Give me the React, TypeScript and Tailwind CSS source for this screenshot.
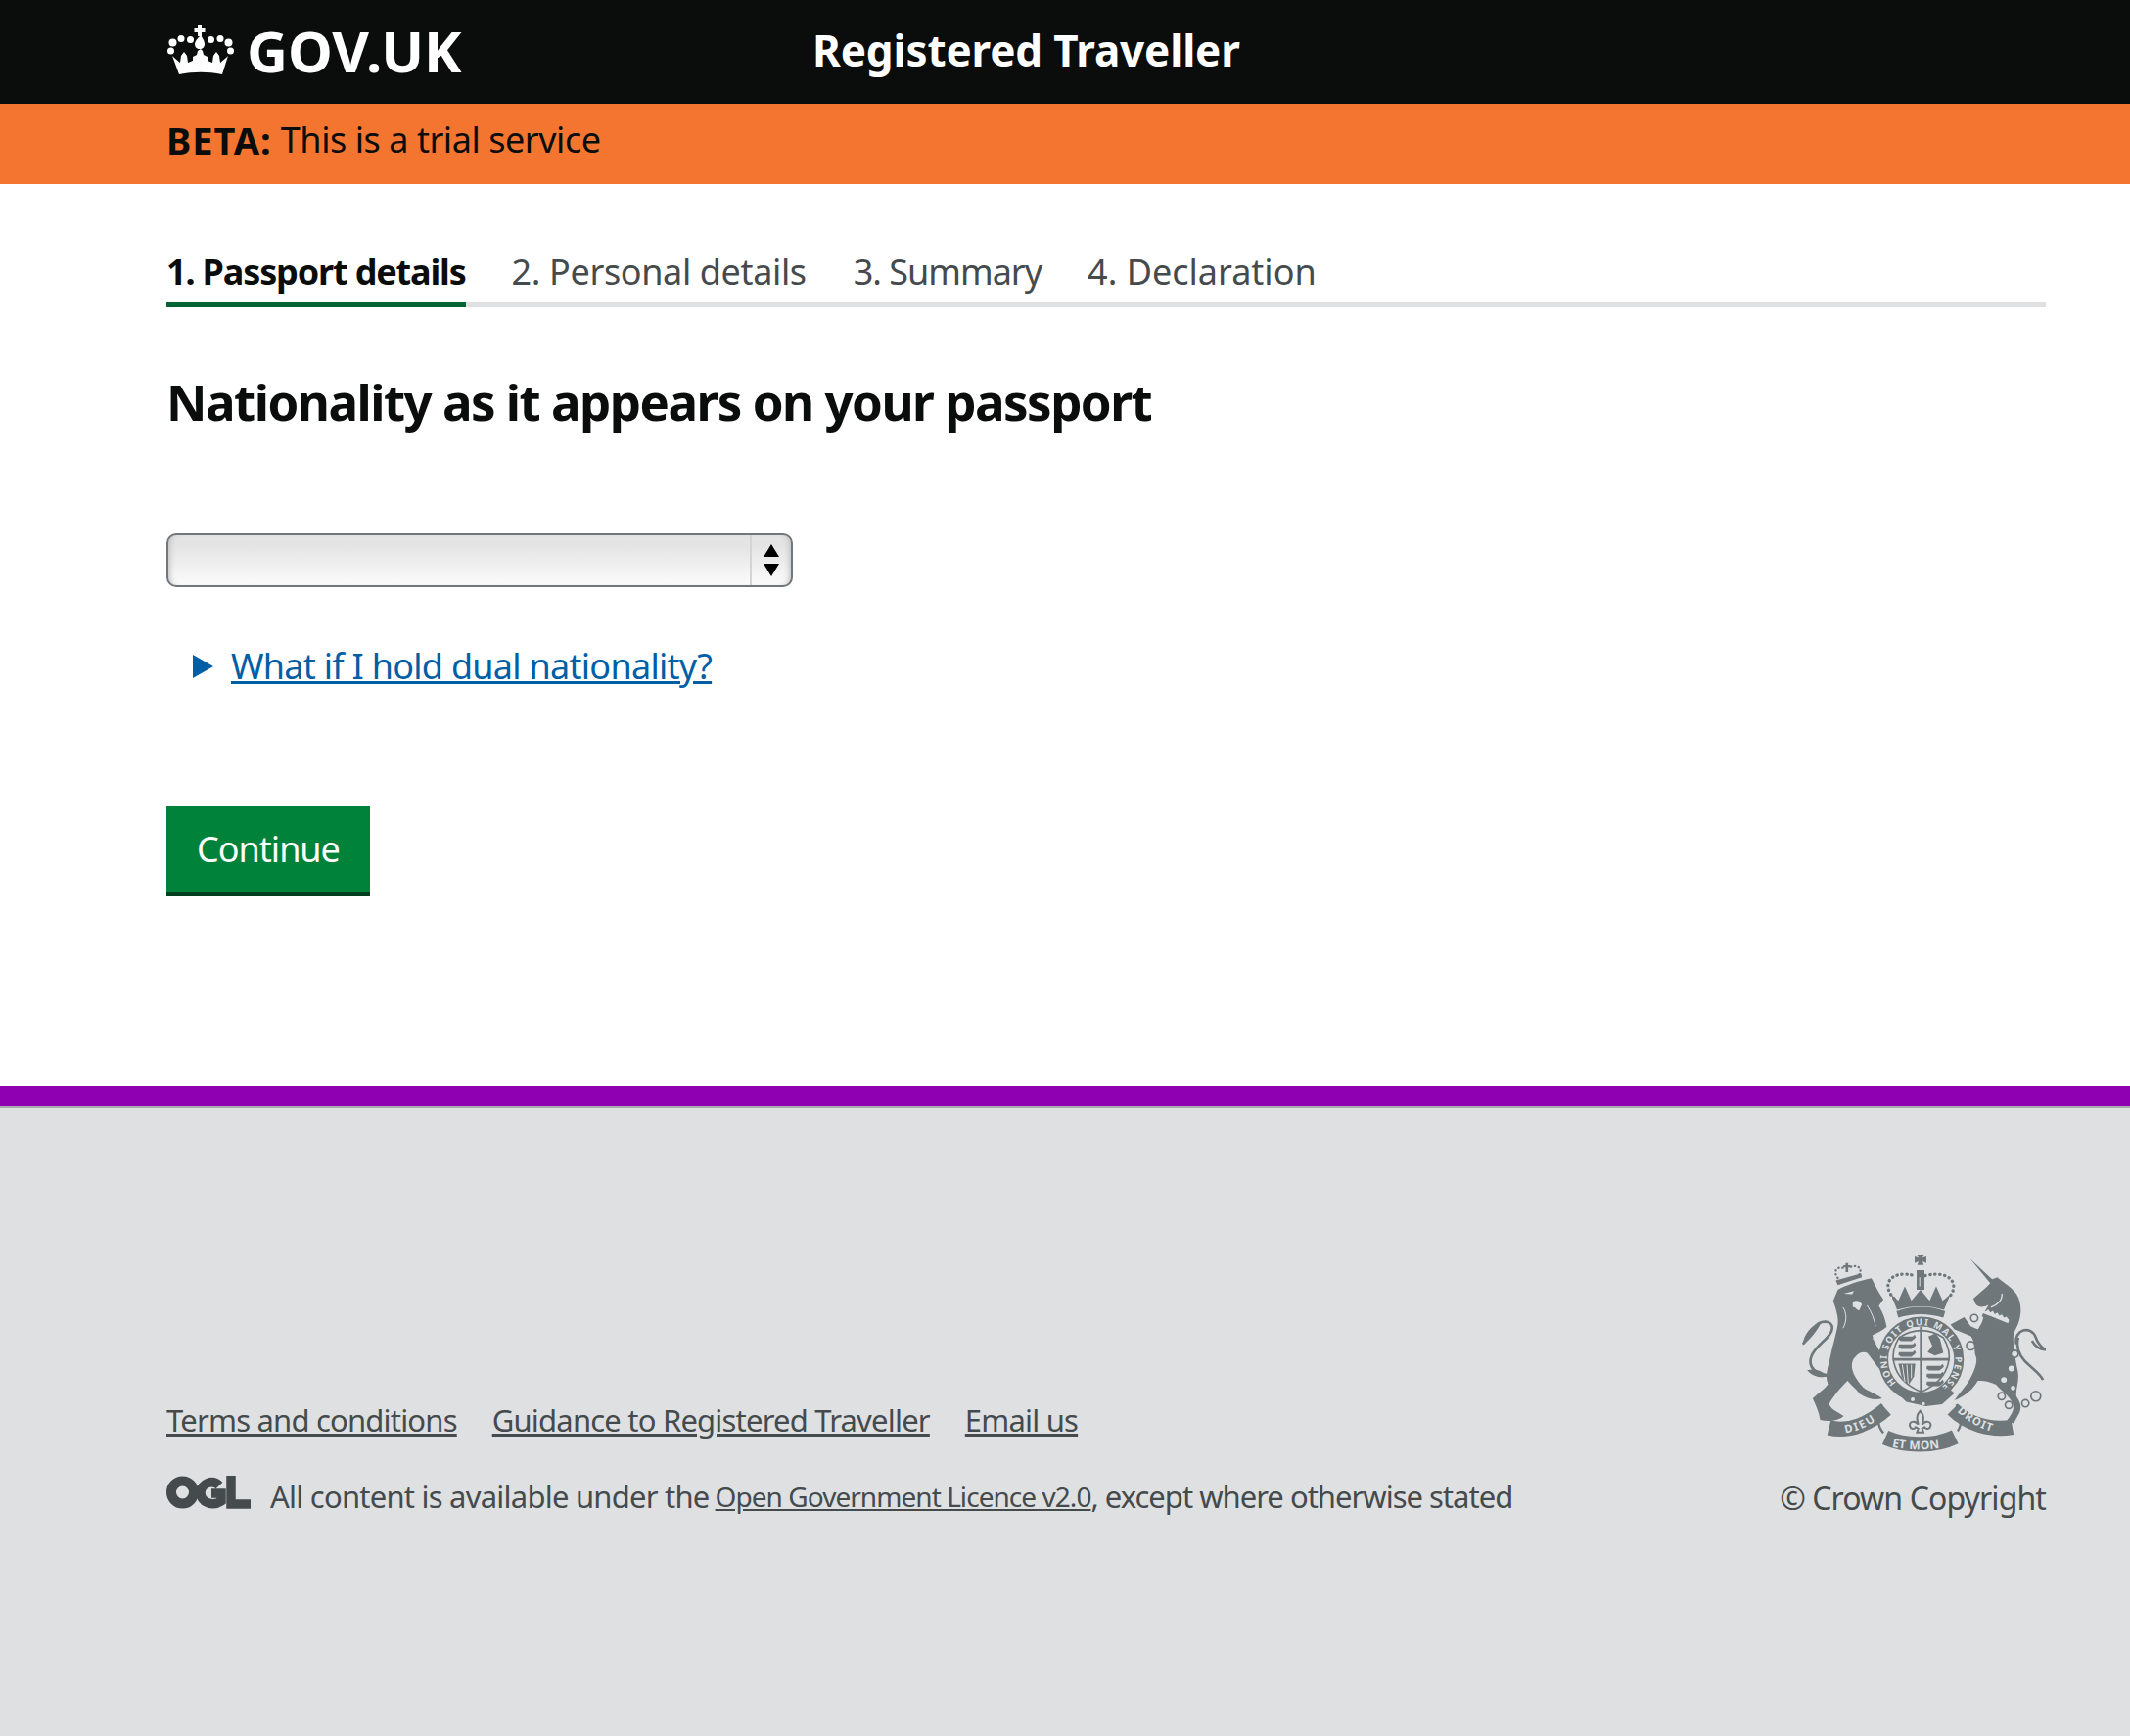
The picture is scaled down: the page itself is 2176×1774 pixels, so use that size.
function CrownLogo() {
  const dots = [
    [5.5, 17.5, 4], [14, 13.5, 3.5], [23.5, 14.5, 3.5], [44.5, 14.5, 3.5], [54, 13.5, 3.5], [62.5, 17.5, 4], [3.5, 26, 3.5], [64.5, 26, 3.5],
  ];
  return (
    <svg viewBox="0 0 68 51" className="ml-px h-[51px] w-[68px]" fill="#fff">
      {dots.map(([cx, cy, r]) => (
        <circle key={`${cx}-${cy}`} cx={cx} cy={cy} r={r} />
      ))}
      <path d="M31 0h4v3h3.5v4H35v4h-4V7h-3.5V3H31z" />
      <path d="M34 10c2 3 4 6 4 9s-2 5-5 5-5-2-5-5 3-6 6-9z" />
      <path d="M7 33l6 5 1-7 3-4 3 4 1 7 5-2v-4l4-2 1-4 3-2 2 2 1 4 4 2v4l5 2 1-7 3-4 3 4 1 7 6-5 2-2-6 19c-15-3-29-3-44 0L5 31z" />
    </svg>
  );
}

function OglLogo() {
  return (
    <svg viewBox="0 0 86 34" className="h-[34px] w-[86px]" fill="none" stroke="#454a4c">
      <circle cx="16.5" cy="17" r="11.5" strokeWidth="10" />
      <path d="M54 10C47 3 35 8 35 17.5S47 32 56 26v-8H46" strokeWidth="9.5" />
      <path d="M66 0v29h20" strokeWidth="9.5" />
    </svg>
  );
}

function CoatOfArms() {
  const c = '#6f777b';
  const bg = '#dee0e2';
  const font = "'Noto Sans', sans-serif";
  const lions = [
    [420, 322], [420, 346], [420, 370], [506, 412], [506, 436], [506, 460],
  ];
  return (
    <svg viewBox="120 70 750 610" className="h-[203px] w-[250px]">
      <defs>
        <path id="garter" d="M411 464A105 105 0 1 1 557 471" />
        <path id="dieu" d="M255 618C300 612 345 590 372 558" />
        <path id="etmon" d="M398 660C450 672 520 672 578 658" />
        <path id="droit" d="M598 552C630 585 680 610 722 618" />
      </defs>

      {/* lion */}
      <path fill={c} d="M232 178C255 165 300 150 335 143C345 160 350 175 372 208L358 228C372 250 378 270 382 292C365 305 350 312 338 318C350 350 372 378 392 418L372 432C355 420 345 400 322 372C305 365 290 375 278 395C268 420 285 450 310 478C325 490 345 495 368 512C345 520 320 510 300 498C285 480 272 470 262 458C240 480 218 505 205 530C215 550 235 555 250 566C235 580 205 585 178 578C175 555 165 535 155 512C172 495 190 485 202 468C190 440 205 410 212 370C222 330 228 310 232 285C235 260 225 235 218 212Z" />
      <path fill="none" stroke={c} strokeWidth="8" d="M205 440C165 440 140 415 150 385C160 350 215 325 215 295C215 270 175 270 160 295C150 310 140 330 125 345" />
      <path fill={c} d="M124 348C128 315 150 285 182 278C170 300 150 330 124 348ZM138 425C160 420 185 425 200 445C175 450 152 442 138 425Z" />
      <path fill="none" stroke={c} strokeWidth="7" strokeDasharray="1 11" strokeLinecap="round" d="M232 142C215 120 232 105 250 112M272 108C295 100 310 115 296 134" />
      <path fill={c} d="M226 150L304 128L306 140L232 164ZM256 96h8v7h7v7h-7v14h-8v-14h-7v-7h7z" />
      <path fill={bg} d="M250 190L282 182L276 192ZM278 215C290 207 304 215 306 223L298 241C290 243 288 231 278 231Z" />
      <path fill="none" stroke={bg} strokeWidth="3" d="M248 232C260 250 260 275 248 296M322 226C336 248 344 268 348 290M340 326L386 412" />

      {/* unicorn */}
      <path fill={c} d="M638 83L706 146L722 140C730 150 760 165 780 190C796 215 798 250 785 285L772 312C768 340 775 380 785 430C790 460 778 480 780 505C790 520 798 535 790 555L772 588L750 582C762 565 775 550 770 530C760 505 735 490 718 470C700 462 685 455 662 458C650 480 625 505 590 518C605 495 630 470 640 448C655 420 662 395 655 380C650 365 655 340 640 320L590 300L578 285L620 262L640 290L662 300C672 285 680 270 680 250L695 225C680 232 665 235 655 222L648 205C665 190 685 175 700 158Z" />
      <path fill="none" stroke={bg} strokeWidth="4" d="M736 190C738 210 722 225 702 232" />
      <path fill={bg} d="M672 248l8-12 6 9 8-7 6 10 8-5 6 10 8-5 6 10 8-4 6 10 8-3 8 10-6 18-78-30z" />
      <path fill={c} d="M678 250l90 36-4 10-90-36z" />
      <path fill="none" stroke={c} strokeWidth="8" d="M780 345C772 300 825 285 840 325C845 340 855 352 868 362C850 362 838 352 828 335M786 325C775 365 800 395 825 415C840 428 855 440 862 455" />
      {[[651, 265, 11], [640, 350, 13], [775, 375, 11], [735, 505, 11], [757, 532, 11], [808, 527, 11], [840, 505, 15]].map(([cx, cy, r]) => (
        <circle key={cx} cx={cx} cy={cy} r={r} fill={bg} stroke={c} strokeWidth="5" />
      ))}
      {[[765, 420, 9], [742, 455, 9], [770, 480, 7]].map(([cx, cy, r]) => (
        <circle key={cx} cx={cx} cy={cy} r={r} fill={bg} />
      ))}

      {/* main crown */}
      <path fill="none" stroke={c} strokeWidth="10" strokeDasharray="1 14" strokeLinecap="round" d="M405 205C365 165 390 115 470 135M500 135C580 115 610 165 570 205" />
      <path fill={c} d="M476 70h20l-4 10 12-4v20l-12-5 4 11h-20l4-11-12 5V76l12 4zM474 118h24v60h-24z" />
      <path fill={bg} d="M482 140h3v28h-3zM489 140h3v28h-3z" />
      <path fill={c} d="M395 192L418 212L438 168L458 212L486 178L514 212L534 168L554 212L578 192L558 240C510 226 462 226 414 240Z" />
      <path fill={c} d="M412 244C460 226 515 226 562 244L556 264C510 250 462 250 418 264Z" />

      {/* garter */}
      <circle cx="488" cy="392" r="116" fill={bg} stroke={c} strokeWidth="30" />
      <path fill={bg} stroke={c} strokeWidth="5" d="M420 325Q488 282 556 325Q580 365 572 400Q560 460 488 492Q415 460 404 400Q396 365 420 325Z" />
      <path stroke={c} strokeWidth="8" d="M488 292V492M400 392H576" />
      {lions.map(([x, y]) => (
        <path key={`${x}-${y}`} fill={c} d={`M${x} ${y}h42l6-6 4 8-6 6-8 6h-32l-8-6z`} />
      ))}
      <path fill={c} d="M510 322L532 312L546 330L556 372L530 380L508 370L522 350Z" />
      <path fill={c} d="M418 405H470L466 445L448 472L428 445Z" />
      <path stroke={bg} strokeWidth="3" d="M430 408L438 460M444 408L448 466M458 408V450" />
      <text fill={bg} fontFamily={font} fontWeight="700" fontSize="28">
        <textPath href="#garter" textLength="505">HONI SOIT QUI MAL Y PENSE</textPath>
      </text>
      <path fill={c} d="M418 498L448 490L540 504L568 476L590 496L552 530L502 536L442 522Z" />
      <circle cx="462" cy="515" r="6" fill={bg} />
      <circle cx="495" cy="528" r="5" fill={bg} />

      {/* motto */}
      <g fill="none" stroke={c} strokeWidth="46">
        <path d="M205 602C270 618 335 585 380 545" />
        <path d="M378 632C440 660 530 660 592 630" />
        <path d="M585 545C630 590 700 612 768 600" />
      </g>
      <path fill="none" stroke={c} strokeWidth="7" d="M368 530C350 560 352 595 372 618M596 530C612 560 615 590 600 612" />
      <path fill={bg} stroke={c} strokeWidth="6" d="M485 550C499 565 495 578 491 592C501 578 519 582 517 596C515 606 503 608 499 600L491 604L495 616H475L479 604L471 600C467 608 455 606 453 596C451 582 469 578 479 592C475 578 471 565 485 550Z" />
      <text fill={bg} fontFamily={font} fontWeight="700" fontSize="34" letterSpacing="6">
        <textPath href="#dieu">DIEU</textPath>
      </text>
      <text fill={bg} fontFamily={font} fontWeight="700" fontSize="36" letterSpacing="1">
        <textPath href="#etmon">ET MON</textPath>
      </text>
      <text fill={bg} fontFamily={font} fontWeight="700" fontSize="34" letterSpacing="4">
        <textPath href="#droit">DROIT</textPath>
      </text>
    </svg>
  );
}

function SelectBox() {
  return (
    <div className="flex h-[55px] w-[640px] rounded-[10px] border-2 border-[#6f777b] bg-gradient-to-b from-[#e4e4e4] from-20% to-[#fbfbfb] shadow-[inset_6px_0_6px_-5px_#b8b8b8,inset_-6px_0_6px_-5px_#b8b8b8]">
      <div className="flex-1" />
      <div className="flex w-[42px] flex-col items-center justify-center gap-[7px] border-l-2 border-[#d4d4d4]">
        <span className="h-0 w-0 border-x-[8px] border-b-[13px] border-x-transparent border-b-black" />
        <span className="h-0 w-0 border-x-[8px] border-t-[13px] border-x-transparent border-t-black" />
      </div>
    </div>
  );
}

const tabs = [
  { label: '2. Personal details', className: 'tracking-[-0.37px]' },
  { label: '3. Summary', className: 'tracking-[-1px] ml-px' },
  { label: '4. Declaration', className: '' },
];

export default function App() {
  return (
    <div className="flex min-h-[1774px] flex-col font-['Noto_Sans',sans-serif] text-[#0b0c0c]">
      <header className="flex h-[106px] items-center bg-[#0b0c0c] pb-[3px] pl-[170px] text-white">
        <div className="flex w-[660px] items-center gap-[13px]">
          <CrownLogo />
          <span className="text-[58px] leading-none font-bold">GOV.UK</span>
        </div>
        <span className="mb-[2px] text-[44px] font-bold tracking-[-0.15px]">Registered Traveller</span>
      </header>

      <div className="flex h-[82px] items-center bg-[#f47530] pb-[8px] pl-[170px] text-[36px]">
        <strong className="mr-[9px] text-[38px] font-bold tracking-[1px]">BETA:</strong>
        <span className="tracking-[-0.45px]">This is a trial service</span>
      </div>

      <main className="flex flex-1 flex-col pt-[60px] pr-[86px] pl-[170px]">
        <nav className="flex h-[66px] items-start border-b-[5px] border-[#dee0e2] pt-[3px] text-[36px] text-[#454a4c]">
          <div className="-mt-[3px] -mb-[5px] h-[66px] border-b-[5px] border-[#006435] pt-[3px] font-bold tracking-[-1.15px] text-[#0b0c0c]">
            1. Passport details
          </div>
          <div className="ml-[47px] flex gap-[47px]">
            {tabs.map((t) => (
              <span key={t.label} className={t.className}>
                {t.label}
              </span>
            ))}
          </div>
        </nav>

        <h1 className="mt-[58px] text-[51px] leading-[76px] font-bold tracking-[-1.5px]">
          Nationality as it appears on your passport
        </h1>

        <div className="mt-[97px]">
          <SelectBox />
        </div>

        <div className="mt-[54px] flex items-center gap-[18px] pl-[27px] text-[36px] tracking-[-0.72px] text-[#005ea5]">
          <span className="h-0 w-0 border-y-[12px] border-l-[21px] border-y-transparent border-l-[#005ea5]" />
          <a className="underline">What if I hold dual nationality?</a>
        </div>

        <button className="mt-[116px] h-[92px] w-[208px] border-b-[4px] border-[#00401e] bg-[#00823b] text-[36px] tracking-[-1px] text-white">
          Continue
        </button>
      </main>

      <div className="h-[20px] bg-[#8f00b3]" />

      <footer className="flex h-[644px] items-start justify-between border-t-2 border-[#a9aaad] bg-[#dee0e2] pt-[150px] pr-[86px] pl-[170px] text-[#454a4c]">
        <div className="mt-[146px] flex flex-col">
          <div className="flex gap-[36px] text-[31px] tracking-[-0.8px]">
            <a className="underline">Terms and conditions</a>
            <a className="underline">Guidance to Registered Traveller</a>
            <a className="underline">Email us</a>
          </div>
          <div className="mt-[33px] flex items-start text-[31px] leading-[42px] tracking-[-0.77px]">
            <OglLogo />
            <span className="ml-[20px]">All content is available under the</span>
            <a className="ml-[6px] text-[28px] tracking-[-0.95px] underline">Open Government Licence v2.0</a>
            <span className="tracking-[-1px]">, except where otherwise stated</span>
          </div>
        </div>
        <div className="flex flex-col items-end">
          <CoatOfArms />
          <span className="mt-[22px] text-[32px] tracking-[-0.9px]">© Crown Copyright</span>
        </div>
      </footer>
    </div>
  );
}
